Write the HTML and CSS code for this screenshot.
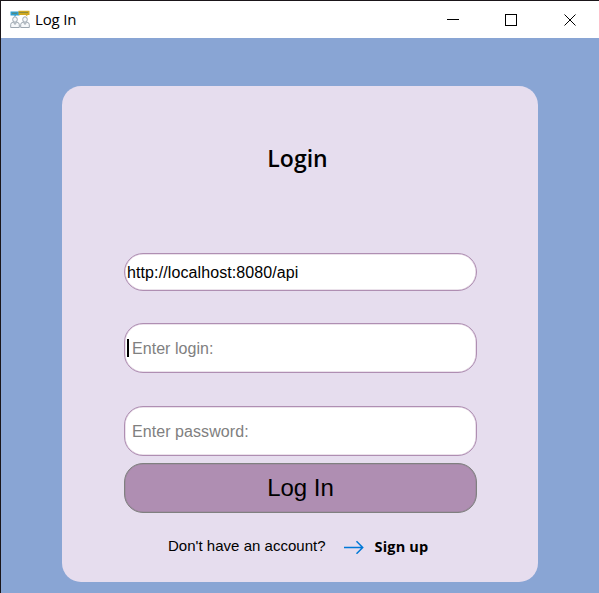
FILE: index.html
```html
<!DOCTYPE html>
<html lang="en">
<head>
<meta charset="utf-8">
<title>Log In</title>
<link rel="stylesheet" href="styles.css">
</head>
<body>
<div class="window">
  <header class="titlebar">
    <svg class="app-icon" width="20" height="19" viewBox="0 0 20 19">
      <path d="M.5 1.500h9v4H6L4.500 7V5.500h-4z" fill="#2f9fd0"/>
      <path d="M8.500.8h11v4.200h-2.200v1.600L15.500 5h-7z" fill="#d0a820"/>
      <path d="M9 2.500h9M2 3.300h5" stroke="#6f7d45" stroke-width=".7"/>
      <g fill="#f6f8fa" stroke="#9da7b0" stroke-width="1">
        <path d="M.7 17.500v-3q0-2 2.600-2.500h3.400q2.600.5 2.600 2.500v3z"/>
        <path d="M10.700 17.500v-3q0-2 2.600-2.500h3.400q2.600.5 2.600 2.500v3z"/>
        <ellipse cx="5" cy="9.500" rx="2.300" ry="2.700"/>
        <ellipse cx="15" cy="9.500" rx="2.300" ry="2.700"/>
        <path d="m3.500 12.500 1.500 2 1.500-2m7 0 1.500 2 1.500-2" fill="none"/>
      </g>
    </svg>
    <span class="window-title">Log In</span>
    <svg class="controls" width="130" height="14" viewBox="0 0 130 14" fill="none" stroke="#000">
      <path d="M0 6.500h12"/>
      <rect x="58.500" y="1.500" width="11" height="11"/>
      <path d="m117.500 1.500 11 11m0-11-11 11"/>
    </svg>
  </header>
  <main class="content">
    <form class="card">
      <h1 class="heading">Login</h1>
      <div class="field field-url"><span>http://localhost:8080/api</span></div>
      <div class="field field-login"><i class="caret"></i><span>Enter login:</span></div>
      <div class="field field-password"><span>Enter password:</span></div>
      <button class="submit" type="button"><span>Log In</span></button>
      <div class="signup">
        <span class="question">Don't have an account?</span>
        <svg class="arrow" width="20" height="14" viewBox="0 0 20 14" fill="none" stroke="#0078d7" stroke-width="1.500">
          <path d="M0 7.500h18.500M12.500 1.300l6.200 6.200-6.200 6.200"/>
        </svg>
        <span class="link">Sign up</span>
      </div>
    </form>
  </main>
</div>
</body>
</html>
```
FILE: styles.css
```css
* { box-sizing: border-box; }
body { margin: 0; overflow: hidden; font-family: "Liberation Sans", Arial, sans-serif; color: #000; }
.window {
  width: 599px;
  height: 593px;
  display: flex;
  flex-direction: column;
  background: #89a5d4;
  border-top: 1px solid #1a1519;
  border-left: 1px solid #1a1519;
}
.titlebar {
  height: 37px;
  flex: none;
  display: flex;
  align-items: center;
  padding: 0 22px 0 9px;
  background: #fff;
}
.app-icon { flex: none; }
.window-title {
  margin: 0 0 2px 5px;
  font: 15px/20px "Open Sans", sans-serif;
  letter-spacing: -0.15px;
}
.controls { margin-left: auto; }
.content { flex: 1; padding: 48px 61px 0; }
.card {
  width: 476px;
  height: 496px;
  display: flex;
  flex-direction: column;
  padding: 52px 61px 0 62px;
  border-radius: 19px;
  background: #e6ddee;
}
.heading {
  margin: 0 6px 75px 0;
  height: 40px;
  font: 600 23px/40px "Open Sans", sans-serif;
  text-align: center;
}
.field {
  flex: none;
  display: flex;
  align-items: center;
  border: 1px solid #af8eb2;
  border-radius: 19px;
  background: #fff;
  box-shadow: inset 0 0 0 0.5px #af8eb280;
  font-size: 16px;
  color: #808080;
}
.field span { padding-top: 2px; }
.field-url { height: 38px; padding-left: 2px; margin-bottom: 32px; color: #000; letter-spacing: 0.1px; }
.field-login { height: 50px; padding-left: 2px; margin-bottom: 33px; letter-spacing: 0.04px; }
.field-password { height: 50px; padding-left: 7px; margin-bottom: 7px; letter-spacing: 0.07px; }
.caret { width: 2px; height: 18px; margin-right: 3px; background: #000; }
.submit {
  flex: none;
  height: 50px;
  padding: 0;
  border: 1px solid #808080;
  border-radius: 19px;
  background: #af8eb2;
  box-shadow: inset 0 0 0 0.5px #80808080;
  color: #000;
  font: 24px/28px "Liberation Sans", Arial, sans-serif;
}
.signup { display: flex; align-items: center; height: 24px; margin-top: 22px; padding-left: 44px; }
.question { margin-bottom: 3px; font-size: 15px; letter-spacing: 0.02px; }
.arrow { margin-left: 18px; }
.link { margin-left: 11px; font: 700 14.500px/20px "Open Sans", sans-serif; letter-spacing: 0.15px; }
```
